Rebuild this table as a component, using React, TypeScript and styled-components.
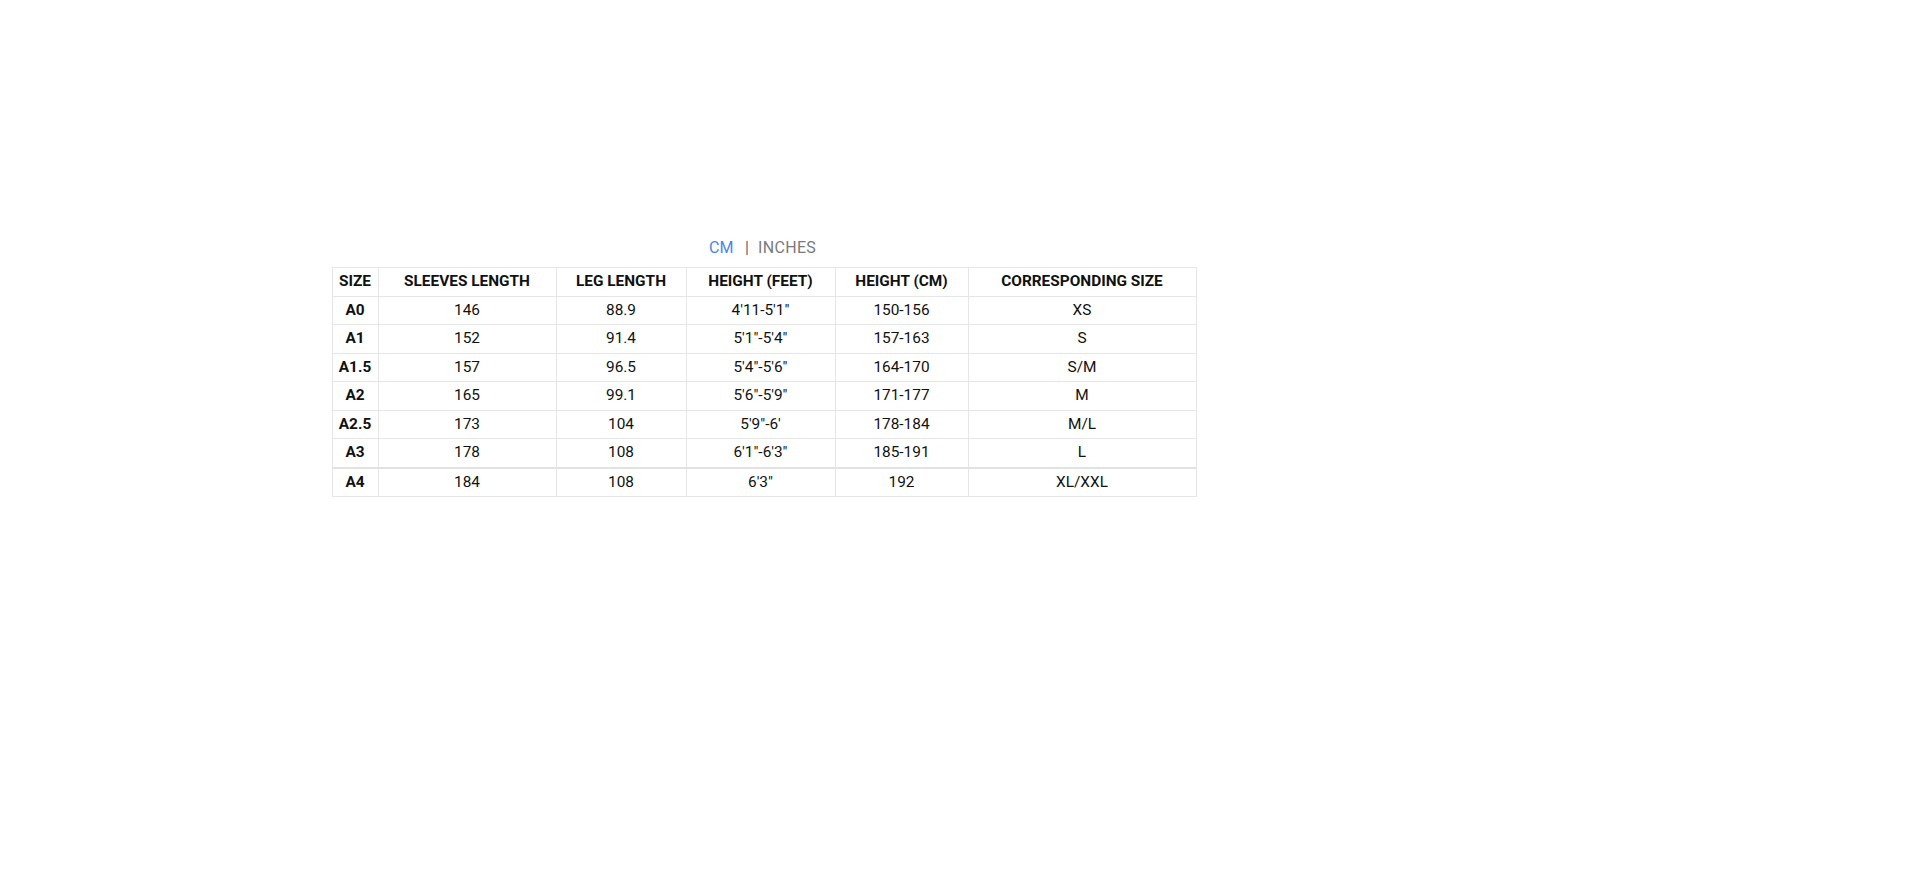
import React from "react";
import styled, { createGlobalStyle } from "styled-components";

const GlobalStyle = createGlobalStyle`
  html, body { margin: 0; padding: 0; background: #ffffff; }
  body { font-family: Roboto, "Liberation Sans", Arial, sans-serif; color: #111; }
`;

const Page = styled.div`
  padding: 238px 0 0 332px;
  min-height: 873px;
  box-sizing: border-box;
`;

const Block = styled.div`
  width: 864px;
  display: flex;
  flex-direction: column;
  align-items: center;
`;

const Toggle = styled.div`
  display: flex;
  align-items: center;
  font-size: 16px;
  line-height: normal;
  letter-spacing: 0.3px;
  margin-bottom: 10px;
  margin-right: 3px;
`;

const UnitOption = styled.span<{ $active?: boolean }>`
  color: ${(p) => (p.$active ? "#4a86e8" : "#7a7a7a")};
  cursor: pointer;
`;

const Separator = styled.span`
  color: #666;
  margin: 0 9px 0 11px;
`;

const Table = styled.table`
  width: 864px;
  table-layout: fixed;
  border-collapse: collapse;
  font-size: 15.4px;
`;

const HeadCell = styled.th`
  border: 1px solid #e6e6e6;
  padding: 5px 2px;
  font-weight: 700;
  text-align: center;
  color: #111;
  line-height: 17.5px;
  white-space: nowrap;
`;

const Row = styled.tr<{ $strong?: boolean }>`
  ${(p) => (p.$strong ? "border-top: 2px solid #e2e2e2;" : "")}
`;

const Cell = styled.td<{ $bold?: boolean }>`
  border: 1px solid #e6e6e6;
  padding: 5px 2px;
  text-align: center;
  color: #111;
  font-weight: ${(p) => (p.$bold ? 700 : 400)};
  line-height: 17.5px;
  white-space: nowrap;
`;

const widths = [46, 178, 130, 149, 133, 228];
const headers = ["SIZE", "SLEEVES LENGTH", "LEG LENGTH", "HEIGHT (FEET)", "HEIGHT (CM)", "CORRESPONDING SIZE"];
const rows = [
  ["A0", "146", "88.9", "4'11-5'1\"", "150-156", "XS"],
  ["A1", "152", "91.4", "5'1\"-5'4\"", "157-163", "S"],
  ["A1.5", "157", "96.5", "5'4\"-5'6\"", "164-170", "S/M"],
  ["A2", "165", "99.1", "5'6\"-5'9\"", "171-177", "M"],
  ["A2.5", "173", "104", "5'9\"-6'", "178-184", "M/L"],
  ["A3", "178", "108", "6'1\"-6'3\"", "185-191", "L"],
  ["A4", "184", "108", "6'3\"", "192", "XL/XXL"],
];

export default function App() {
  return (
    <>
      <GlobalStyle />
      <Page>
        <Block>
          <Toggle>
            <UnitOption $active>CM</UnitOption>
            <Separator>|</Separator>
            <UnitOption>INCHES</UnitOption>
          </Toggle>
          <Table>
            <colgroup>
              {widths.map((w, i) => (
                <col key={i} style={{ width: w }} />
              ))}
            </colgroup>
            <thead>
              <tr>
                {headers.map((h) => (
                  <HeadCell key={h}>{h}</HeadCell>
                ))}
              </tr>
            </thead>
            <tbody>
              {rows.map((r, i) => (
                <Row key={r[0]} $strong={i === rows.length - 1}>
                  {r.map((c, j) => (
                    <Cell key={j} $bold={j === 0}>
                      {c}
                    </Cell>
                  ))}
                </Row>
              ))}
            </tbody>
          </Table>
        </Block>
      </Page>
    </>
  );
}
